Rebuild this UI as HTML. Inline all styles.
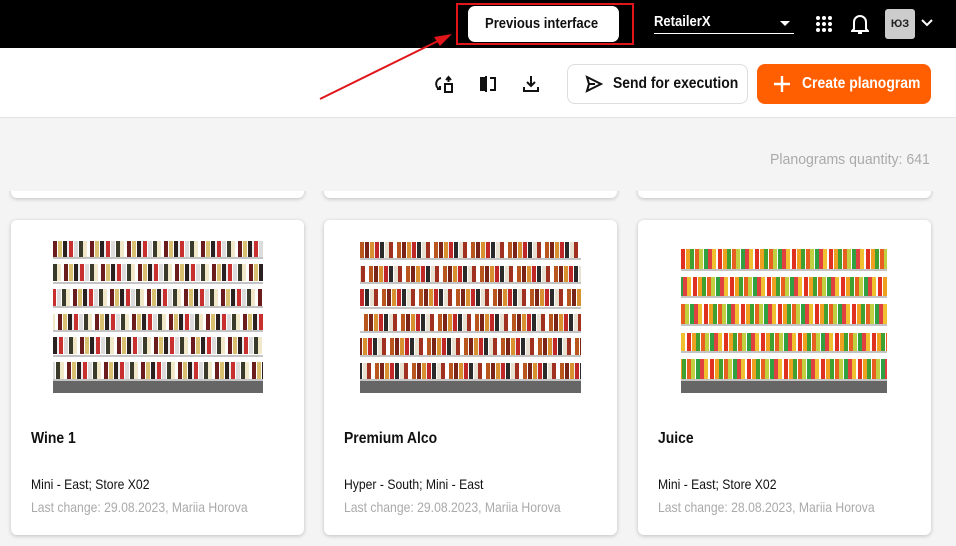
<!DOCTYPE html>
<html><head><meta charset="utf-8"><style>
*{box-sizing:border-box;margin:0;padding:0}
body{width:956px;height:546px;overflow:hidden;background:#f4f4f4;font-family:"Liberation Sans",sans-serif;position:relative}
.n{display:inline-block;transform:scaleX(.87);transform-origin:0 50%;white-space:nowrap}
.top{position:absolute;left:0;top:0;width:956px;height:48px;background:#000}
.prev{position:absolute;left:468px;top:6px;width:151px;height:36px;background:#fff;border-radius:7px;font-weight:bold;font-size:15px;line-height:36px;color:#111;padding-left:17px}
.redbox{position:absolute;left:456px;top:3px;width:178px;height:42px;border:2px solid #e0161b}
.ret{position:absolute;left:654px;top:13px;width:140px;height:21px;border-bottom:1px solid #fff;color:#fff;font-weight:bold;font-size:15px}
.ret:after{content:"";position:absolute;right:4px;top:8px;border:5px solid transparent;border-top:5px solid #fff}
.tool{position:absolute;left:0;top:48px;width:956px;height:70px;background:#fff;border-bottom:1px solid #e4e4e4}
.send{position:absolute;left:567px;top:64px;width:181px;height:40px;border:1px solid #ddd;border-radius:8px;background:#fff;font-weight:bold;font-size:16px;line-height:38px;color:#111;padding-left:45px}
.create{position:absolute;left:757px;top:64px;width:174px;height:40px;border-radius:8px;background:#ff5f00;color:#fff;font-weight:bold;font-size:16px;line-height:40px;padding-left:45px}
.qty{position:absolute;left:770px;top:151px;color:#aaa;font-size:15px}
.qty .n{transform:scaleX(.94)}
.card{position:absolute;background:#fff;border-radius:6px;box-shadow:0 1px 4px rgba(0,0,0,.22)}
.t{position:absolute;left:20px;top:210px;font-weight:bold;font-size:16px;color:#111}
.s{position:absolute;left:20px;top:256px;font-size:14px;color:#111}
.l{position:absolute;left:20px;top:279px;font-size:14px;color:#aaa}
.img{position:absolute;display:flex;flex-direction:column}
.sh{flex:1;border-bottom:2px solid #c4c4c4;background-color:#fff;background-repeat:repeat-x;background-size:37px 75%;background-position:0 100%}
.a{background-image:linear-gradient(90deg,#6b1d1d 0 4px,#fff 4px 5px,#d8c070 5px 9px,#fff 9px 10px,#2a2020 10px 14px,#eee 14px 16px,#c83030 16px 20px,#fff 20px 21px,#dcdcdc 21px 25px,#fff 25px 26px,#3a3a2a 26px 30px,#f0e8c8 30px 34px,#fff 34px 37px)}
.b{background-image:linear-gradient(90deg,#b8561e 0 4px,#fff 4px 5px,#7a2418 5px 9px,#fff 9px 10px,#d89030 10px 14px,#eee 14px 15px,#c02828 15px 19px,#fff 19px 20px,#2a2a2a 20px 24px,#fff 24px 25px,#e8e0d0 25px 29px,#a03020 29px 33px,#fff 33px 37px)}
.c{background-image:linear-gradient(90deg,#e03020 0 4px,#fff 4px 5px,#f0a020 5px 9px,#40a030 9px 13px,#fff 13px 14px,#e86020 14px 18px,#c0d040 18px 22px,#fff 22px 23px,#30a040 23px 27px,#e04040 27px 31px,#f0c030 31px 35px,#fff 35px 37px)}
.base{height:12px;background:#666}
</style></head><body>
<div class="top"></div>
<div class="prev"><span class="n">Previous interface</span></div>
<div class="redbox"></div>
<div class="ret"><span class="n">RetailerX</span></div>
<svg style="position:absolute;left:815px;top:15px" width="18" height="18" fill="#fff"><circle cx="3" cy="3" r="2"/><circle cx="9" cy="3" r="2"/><circle cx="15" cy="3" r="2"/><circle cx="3" cy="9" r="2"/><circle cx="9" cy="9" r="2"/><circle cx="15" cy="9" r="2"/><circle cx="3" cy="15" r="2"/><circle cx="9" cy="15" r="2"/><circle cx="15" cy="15" r="2"/></svg>
<svg style="position:absolute;left:851px;top:13px" width="18" height="22" fill="none" stroke="#fff" stroke-width="2"><path d="M3 16V9a6 6 0 0 1 12 0v7l2 2H1z"/><path d="M7 20h4"/></svg>
<div style="position:absolute;left:885px;top:9px;width:30px;height:30px;background:#ccc;border-radius:3px;font-size:11px;font-weight:bold;line-height:30px;text-align:center;color:#222">ЮЗ</div>
<svg style="position:absolute;left:921px;top:19px" width="12" height="8" fill="none" stroke="#fff" stroke-width="2"><path d="M1 1l5 5 5-5"/></svg>
<div class="tool"></div>
<svg style="position:absolute;left:0;top:0" width="956" height="120"><line x1="320" y1="99" x2="440" y2="40" stroke="#e0161b" stroke-width="2"/><polygon points="452,34 434,37 440,46" fill="#e0161b"/></svg>
<svg style="position:absolute;left:434px;top:74px" width="20" height="20" fill="none" stroke="#111" stroke-width="2"><path d="M7 4a6 6 0 0 0-2 11M3 15h3v-3"/><rect x="11" y="10" width="7" height="8"/><path d="M12 6l2.5-3 2.5 3M14.5 3v5"/></svg>
<svg style="position:absolute;left:478px;top:74px" width="20" height="20" fill="none" stroke="#111" stroke-width="2"><path d="M8 2v16M8 4H3v12h5" fill="#111"/><path d="M12 4h5v12h-5"/></svg>
<svg style="position:absolute;left:521px;top:74px" width="20" height="20" fill="none" stroke="#111" stroke-width="2"><path d="M10 2v10M6 8l4 4 4-4M3 13v4h14v-4"/></svg>
<div class="send"><span class="n">Send for execution</span></div>
<svg style="position:absolute;left:585px;top:75px" width="18" height="18" fill="none" stroke="#111" stroke-width="2"><path d="M2 2l14 7-14 7 2-7z M4 9h6"/></svg>
<div class="create"><span class="n">Create planogram</span></div>
<svg style="position:absolute;left:773px;top:75px" width="18" height="18" stroke="#fff" stroke-width="2.4"><path d="M9 1v16M1 9h16"/></svg>
<div class="card" style="left:11px;top:188px;width:293px;height:10px;border-radius:0 0 6px 6px"></div>
<div class="card" style="left:324px;top:188px;width:293px;height:10px;border-radius:0 0 6px 6px"></div>
<div class="card" style="left:638px;top:188px;width:293px;height:10px;border-radius:0 0 6px 6px"></div>
<div style="position:absolute;left:0;top:119px;width:956px;height:72px;background:#f4f4f4"></div>
<div class="qty"><span class="n">Planograms quantity: 641</span></div>

<div class="card" style="left:11px;top:220px;width:293px;height:315px">
<div class="img" style="left:42px;top:15px;width:210px;height:158px"><div class="sh a"></div><div class="sh a" style="background-position:11px 100%"></div><div class="sh a" style="background-position:20px 100%"></div><div class="sh a" style="background-position:5px 100%"></div><div class="sh a" style="background-position:27px 100%"></div><div class="sh a" style="background-position:14px 100%"></div><div class="base"></div></div>
<div class="t"><span class="n">Wine 1</span></div><div class="s"><span class="n">Mini - East; Store X02</span></div><div class="l"><span class="n">Last change: 29.08.2023, Mariia Horova</span></div></div>

<div class="card" style="left:324px;top:220px;width:293px;height:315px">
<div class="img" style="left:36px;top:16px;width:221px;height:157px"><div class="sh b"></div><div class="sh b" style="background-position:9px 100%"></div><div class="sh b" style="background-position:22px 100%"></div><div class="sh b" style="background-position:4px 100%"></div><div class="sh b" style="background-position:30px 100%"></div><div class="sh b" style="background-position:15px 100%"></div><div class="base"></div></div>
<div class="t"><span class="n">Premium Alco</span></div><div class="s"><span class="n">Hyper - South; Mini - East</span></div><div class="l"><span class="n">Last change: 29.08.2023, Mariia Horova</span></div></div>

<div class="card" style="left:638px;top:220px;width:293px;height:315px">
<div class="img" style="left:43px;top:23px;width:206px;height:150px"><div class="sh c"></div><div class="sh c" style="background-position:12px 100%"></div><div class="sh c" style="background-position:23px 100%"></div><div class="sh c" style="background-position:6px 100%"></div><div class="sh c" style="background-position:29px 100%"></div><div class="base"></div></div>
<div class="t"><span class="n">Juice</span></div><div class="s"><span class="n">Mini - East; Store X02</span></div><div class="l"><span class="n">Last change: 28.08.2023, Mariia Horova</span></div></div>
</body></html>
